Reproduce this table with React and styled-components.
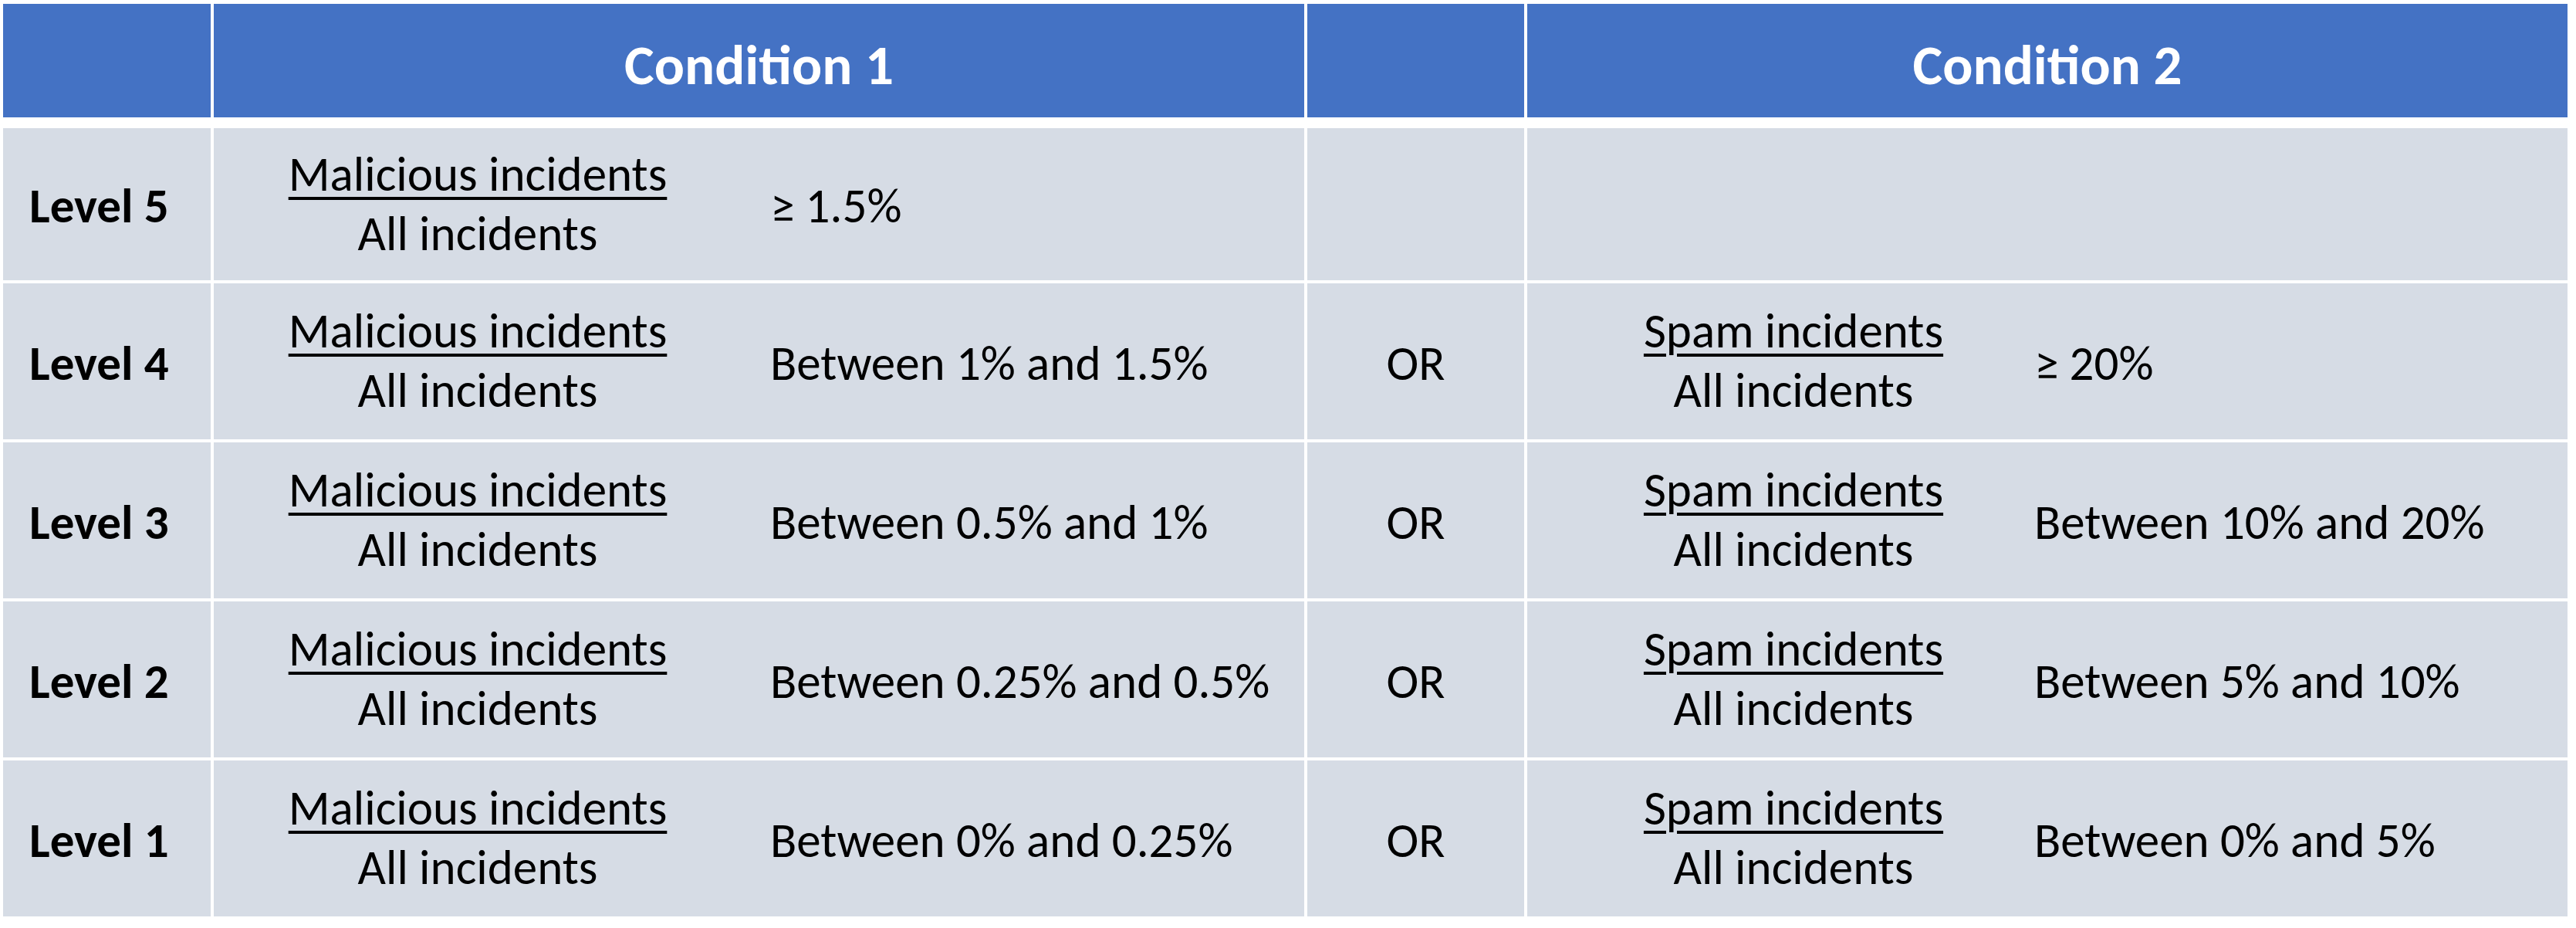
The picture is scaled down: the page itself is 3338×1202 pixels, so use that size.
import React from 'react';
import styled, { createGlobalStyle } from 'styled-components';

const GlobalStyle = createGlobalStyle`
  body {
    margin: 0;
    background: #ffffff;
    font-family: Calibri, Carlito, 'Lato', sans-serif;
    color: #000000;
  }
`;

const COLS = '269px 1413px 281px 1348px';

const Table = styled.div`
  display: flex;
  flex-direction: column;
  gap: 4px;
  padding: 5px 0 0 4px;
  width: 3323px;
`;

const HeaderRow = styled.div`
  display: grid;
  grid-template-columns: ${COLS};
  column-gap: 4px;
  height: 147px;
  margin-bottom: 10px;
`;

const HeadCell = styled.div`
  background: #4472c4;
  color: #ffffff;
  font-weight: 700;
  font-size: 73px;
  display: flex;
  align-items: center;
  justify-content: center;
  padding-top: 10px;
`;

const Row = styled.div`
  display: grid;
  grid-template-columns: ${COLS};
  column-gap: 4px;
  height: ${(p) => p.$h}px;
`;

const Cell = styled.div`
  background: #d6dce5;
  display: flex;
  align-items: center;
  font-size: 63px;
`;

const LevelCell = styled(Cell)`
  font-weight: 700;
  padding-left: 34px;
  padding-top: 4px;
`;

const OrCell = styled(Cell)`
  justify-content: center;
  padding-top: 4px;
`;

const Condition = styled(Cell)`
  padding-left: ${(p) => p.$pad}px;
`;

const Fraction = styled.div`
  width: ${(p) => p.$w}px;
  display: flex;
  flex-direction: column;
  align-items: center;
  line-height: 77px;
  margin-top: -2px;
`;

const Numerator = styled.span`
  text-decoration: underline;
  text-decoration-thickness: 4px;
  text-underline-offset: 8px;
  white-space: nowrap;
`;

const Denominator = styled.span`
  white-space: nowrap;
`;

const Range = styled.div`
  margin-left: ${(p) => p.$gap}px;
  white-space: nowrap;
  padding-top: 4px;
`;

const rows = [
  { level: 'Level 5', c1: '≥ 1.5%', c2: null, h: 197 },
  { level: 'Level 4', c1: 'Between 1% and 1.5%', c2: '≥ 20%', h: 202 },
  { level: 'Level 3', c1: 'Between 0.5% and 1%', c2: 'Between 10% and 20%', h: 202 },
  { level: 'Level 2', c1: 'Between 0.25% and 0.5%', c2: 'Between 5% and 10%', h: 202 },
  { level: 'Level 1', c1: 'Between 0% and 0.25%', c2: 'Between 0% and 5%', h: 202 },
];

function Ratio({ top, width }) {
  return (
    <Fraction $w={width}>
      <Numerator>{top}</Numerator>
      <Denominator>All incidents</Denominator>
    </Fraction>
  );
}

export default function App() {
  return (
    <>
      <GlobalStyle />
      <Table>
        <HeaderRow>
          <HeadCell />
          <HeadCell>Condition 1</HeadCell>
          <HeadCell />
          <HeadCell>Condition 2</HeadCell>
        </HeaderRow>
        {rows.map((r) => (
          <Row key={r.level} $h={r.h}>
            <LevelCell>{r.level}</LevelCell>
            <Condition $pad={42}>
              <Ratio top="Malicious incidents" width={600} />
              <Range $gap={79}>{r.c1}</Range>
            </Condition>
            <OrCell>{r.c2 ? 'OR' : ''}</OrCell>
            <Condition $pad={115}>
              {r.c2 && (
                <>
                  <Ratio top="Spam incidents" width={460} />
                  <Range $gap={82}>{r.c2}</Range>
                </>
              )}
            </Condition>
          </Row>
        ))}
      </Table>
    </>
  );
}
